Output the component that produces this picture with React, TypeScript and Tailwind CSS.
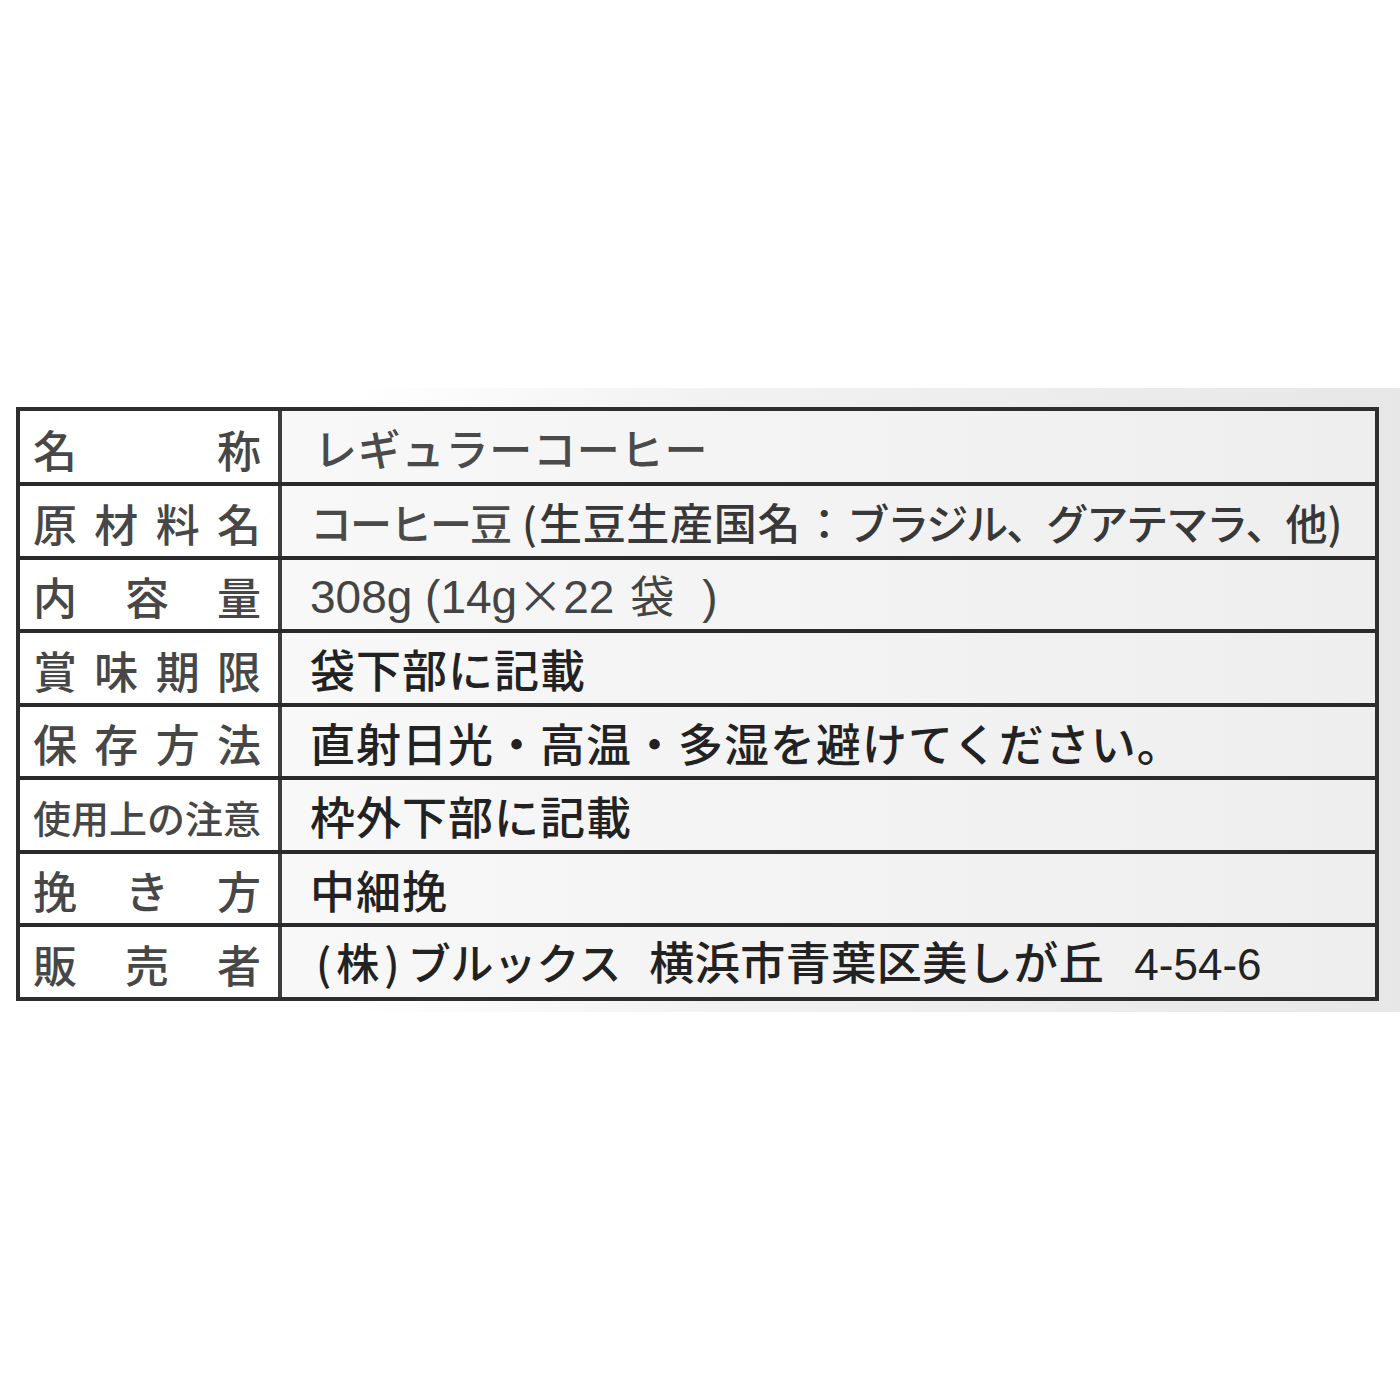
const jp = "font-['Noto_Sans_CJK_JP',sans-serif]";
const latin = "font-['Liberation_Sans','Noto_Sans_CJK_JP',sans-serif]";

function Label({ chars, small }: { chars: string[]; small?: boolean }) {
  return (
    <div
      className={`w-[262px] shrink-0 border-r-4 border-[#3d3d3d] bg-white pl-[13px] pr-[17px] pt-[4px] flex items-center justify-between text-[#474747] font-medium ${jp} ${
        small ? "text-[38px]" : "text-[44px]"
      } leading-none`}
    >
      {chars.map((c, i) => (
        <span key={i}>{c}</span>
      ))}
    </div>
  );
}

function Row({ label, small, first, children }: { label: string[]; small?: boolean; first?: boolean; children: React.ReactNode }) {
  return (
    <div className={`flex ${first ? "h-[71px]" : "h-[73.5px] border-t-4 border-[#2a2a2a]"}`}>
      <Label chars={label} small={small} />
      <div className={`flex-1 flex items-center pl-[28px] pt-[2px] whitespace-nowrap leading-none font-medium text-[#222222] ${jp}`}>
        {children}
      </div>
    </div>
  );
}

export default function App() {
  return (
    <div className="min-h-[1400px] w-[1400px] bg-white">
      <div className="h-[388px]" />
      {/* foil band behind the label */}
      <div className="h-[624px] bg-gradient-to-r from-white from-25% via-[#f2f2f2] to-[#e7e7e7] pt-[19px] pl-[16px]">
        <div className="w-[1363px] border-4 border-[#2e2e2e] bg-gradient-to-r from-[#fbfbfb] via-[#f4f4f4] to-[#eeeeee]">
          <Row label={["名", "称"]} first>
            <span className="ml-[4px] text-[43px] tracking-[0.8px] text-[#4a4a4a]">レギュラーコーヒー</span>
          </Row>
          <Row label={["原", "材", "料", "名"]}>
            <span className="text-[42px] text-[#383838]">
              <span className="tracking-[-2px] text-[#4a4a4a]">コーヒー豆</span>
              <span className="ml-[12px] mr-[2px]">(</span>
              <span className="text-[43px] tracking-[0.7px]">生豆生産国名</span>
              <span className="mx-[2px]">：</span>
              <span className="tracking-[-2px]">ブラジル、グアテマラ、他</span>
              <span className="ml-[2px]">)</span>
            </span>
          </Row>
          <Row label={["内", "容", "量"]}>
            <span className={`${latin} text-[46px] text-[#444444] font-normal`}>
              308g (14g<span className={`${jp} text-[46px]`}>×</span>22
              <span className={`${jp} ml-[16px] text-[44px]`}>袋</span>
              <span className="ml-[28px]">)</span>
            </span>
          </Row>
          <Row label={["賞", "味", "期", "限"]}>
            <span className="text-[45px] tracking-[1px]">袋下部に記載</span>
          </Row>
          <Row label={["保", "存", "方", "法"]}>
            <span className="text-[45px] tracking-[1px]">直射日光・高温・多湿を避けてください。</span>
          </Row>
          <Row label={["使", "用", "上", "の", "注", "意"]} small>
            <span className="text-[45px] tracking-[1px]">枠外下部に記載</span>
          </Row>
          <Row label={["挽", "き", "方"]}>
            <span className="text-[45px] tracking-[1px]">中細挽</span>
          </Row>
          <Row label={["販", "売", "者"]}>
            <span className="ml-[6px] text-[43px]">
              (<span className="mx-[5px]">株</span>)
              <span className="ml-[8px]">ブルックス</span>
              <span className="ml-[28px] text-[45px] tracking-[0.5px]">横浜市青葉区美しが丘</span>
              <span className={`${latin} ml-[30px] text-[44px] font-normal`}>4-54-6</span>
            </span>
          </Row>
        </div>
      </div>
    </div>
  );
}
